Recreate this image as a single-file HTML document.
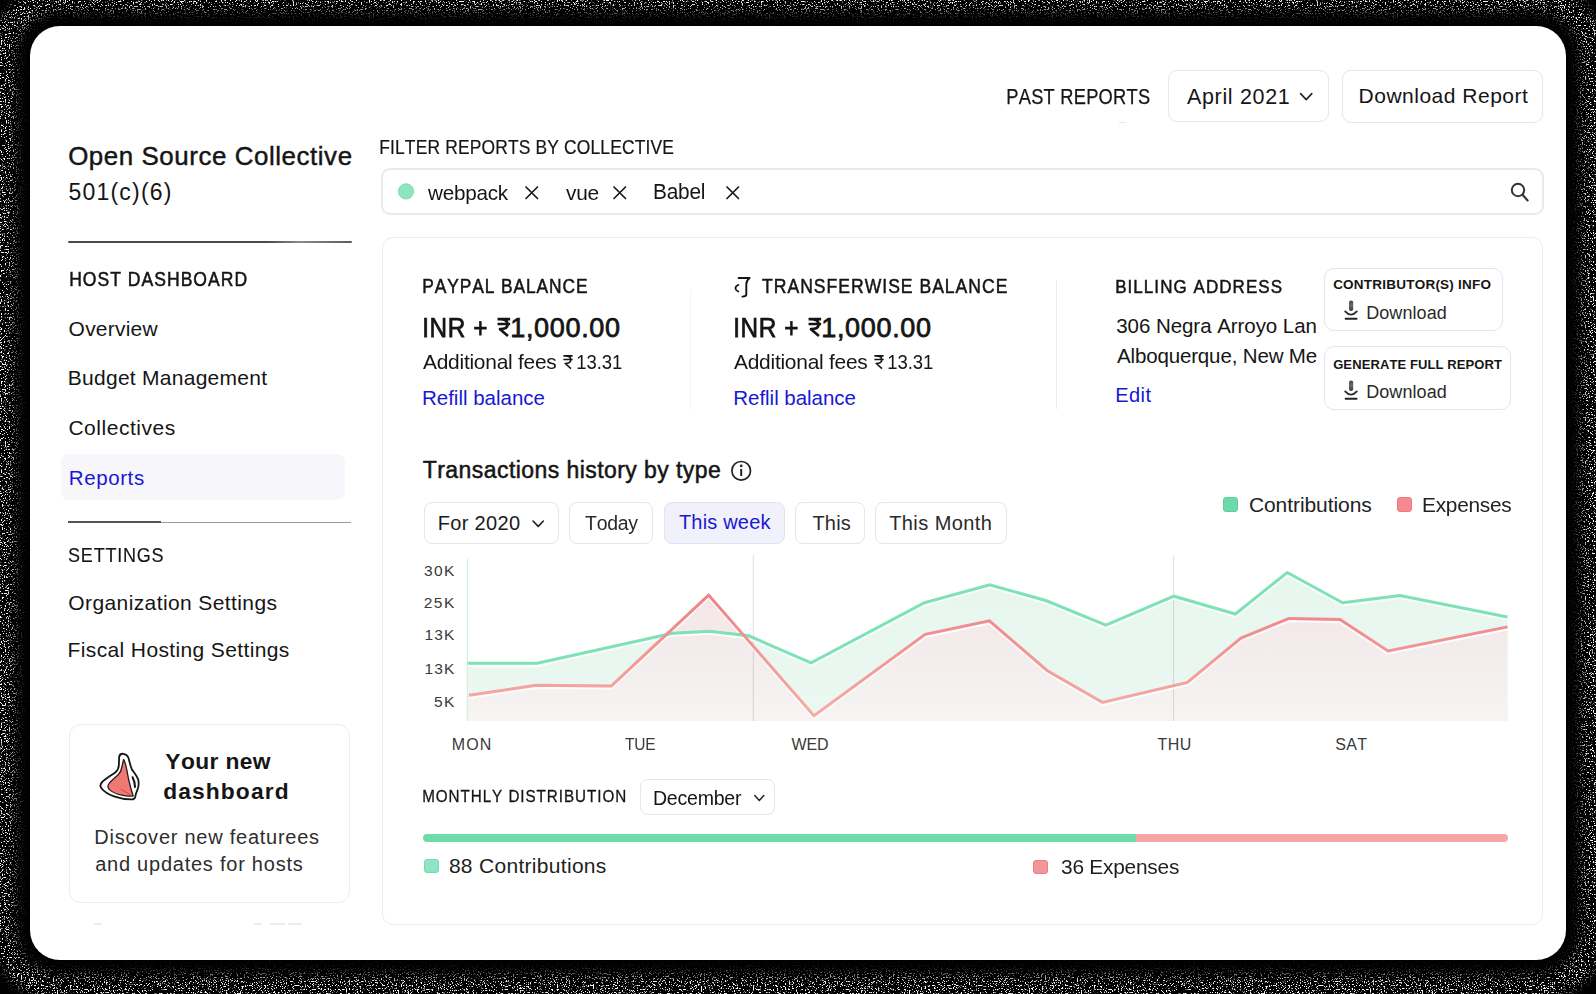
<!DOCTYPE html>
<html><head><meta charset="utf-8"><style>
html,body{margin:0;padding:0;background:#000;}
#root{position:relative;width:1596px;height:994px;overflow:hidden;background:#000;}
.t{position:absolute;white-space:nowrap;line-height:1;font-kerning:none;font-variant-ligatures:none;font-family:"Liberation Sans",sans-serif;}
svg{position:absolute;overflow:visible;}
</style></head><body><div id="root">

<svg style="left:0;top:0" width="1596" height="994" viewBox="0 0 1596 994">
<defs>
<filter id="bl" x="-10%" y="-10%" width="120%" height="120%"><feGaussianBlur stdDeviation="5"/></filter>
<filter id="nz" x="0" y="0" width="1596" height="994" filterUnits="userSpaceOnUse" color-interpolation-filters="sRGB">
<feTurbulence type="fractalNoise" baseFrequency="0.75" numOctaves="2" seed="11" result="t"/>
<feColorMatrix in="t" type="matrix" values="0 0 0 0 1  0 0 0 0 1  0 0 0 0 1  10 0 0 0 -5.75" result="d"/>
<feComposite in="d" in2="SourceGraphic" operator="in"/>
</filter>
<mask id="ringmask"><rect x="0" y="0" width="1596" height="994" fill="#fff"/><rect x="30" y="26" width="1536" height="934" rx="30" fill="#000"/></mask>
</defs>
<g filter="url(#nz)"><g mask="url(#ringmask)">
<rect x="2" y="-2" width="1592" height="990" rx="58" fill="none" stroke="#fff" stroke-width="24" filter="url(#bl)"/>
<rect x="16" y="12" width="1564" height="962" rx="44" fill="none" stroke="#fff" stroke-opacity="0.16" stroke-width="14" filter="url(#bl)"/>
</g></g>
</svg>
<div style="position:absolute;left:30.0px;top:26.0px;width:1536.0px;height:934.0px;background:#fff;border-radius:30px"></div>
<div class="t" style="left:68.17px;top:143.69px;font-size:25.90px;color:#151515;letter-spacing:0.566px;-webkit-text-stroke:0.45px #151515">Open Source Collective</div>
<div class="t" style="left:68.48px;top:180.95px;font-size:23.00px;color:#151515;letter-spacing:1.206px">501(c)(6)</div>
<div style="position:absolute;left:67.5px;top:241.4px;width:284.8px;height:2.0px;background:linear-gradient(90deg,#4a4a4a 0%,#4a4a4a 70%,#8a8a8a 82%,#5a5a5a 100%);border-radius:1px"></div>
<div class="t" style="left:69.15px;top:269.73px;font-size:19.50px;color:#151515;letter-spacing:1.122px;transform:scaleX(0.9000);transform-origin:1.60px 0;-webkit-text-stroke:0.50px #151515">HOST DASHBOARD</div>
<div class="t" style="left:68.61px;top:318.35px;font-size:21.00px;color:#151515;letter-spacing:0.204px">Overview</div>
<div class="t" style="left:67.78px;top:367.45px;font-size:21.00px;color:#151515;letter-spacing:0.269px">Budget Management</div>
<div class="t" style="left:68.43px;top:417.15px;font-size:21.00px;color:#151515;letter-spacing:0.529px">Collectives</div>
<div style="position:absolute;left:60.7px;top:453.9px;width:284.0px;height:46.1px;background:#f6f6fb;border-radius:8px"></div>
<div class="t" style="left:68.82px;top:468.18px;font-size:20.50px;color:#1818d2;letter-spacing:0.590px">Reports</div>
<div style="position:absolute;left:67.5px;top:521.4px;width:93.1px;height:1.6px;background:#555"></div>
<div style="position:absolute;left:160.6px;top:521.8px;width:190.8px;height:1.0px;background:#999"></div>
<div class="t" style="left:68.39px;top:544.60px;font-size:20.00px;color:#151515;letter-spacing:0.847px;transform:scaleX(0.9000);transform-origin:0.91px 0;-webkit-text-stroke:0.15px #151515">SETTINGS</div>
<div class="t" style="left:68.31px;top:591.85px;font-size:21.00px;color:#151515;letter-spacing:0.394px">Organization Settings</div>
<div class="t" style="left:67.58px;top:639.25px;font-size:21.00px;color:#151515;letter-spacing:0.372px">Fiscal Hosting Settings</div>
<div style="position:absolute;left:69.3px;top:724.0px;width:280.3px;height:179.0px;box-sizing:border-box;border:1.5px solid #ebebf0;border-radius:12px;background:#fff"></div>
<div class="t" style="left:165.31px;top:749.62px;font-size:22.80px;color:#151515;letter-spacing:0.376px;font-weight:700">Your new</div>
<div class="t" style="left:163.16px;top:779.82px;font-size:22.80px;color:#151515;letter-spacing:1.111px;font-weight:700">dashboard</div>
<div class="t" style="left:94.36px;top:826.70px;font-size:20.00px;color:#2e2e2e;letter-spacing:0.751px">Discover new featurees</div>
<div class="t" style="left:95.15px;top:853.80px;font-size:20.00px;color:#2e2e2e;letter-spacing:0.761px">and updates for hosts</div>
<svg style="left:95px;top:748px" width="50" height="60" viewBox="95 748 50 60">
<path d="M119.1,757.1 C119.5,754.5 121.5,753.6 123.3,753.8 C125.5,754 127.3,755.2 128.3,757.5 C129.2,760 130,765 131.8,769.2 C133.5,772 136.5,775 138.2,779.5 C139,783 138.6,787 137.4,789.8 C136.4,792 135.6,794.5 135.2,797 C134.6,799 133.2,799.6 131.5,799.4 C128,799.4 121,798.8 114.8,796.6 C110,795 104.5,792.2 101.6,788.5 C100,786.5 100.2,784 102.2,782 C104.5,779.6 111,775.5 115.5,772.2 C118,770 118.8,768 118.9,765 Z" fill="#fdfefe" stroke="#161616" stroke-width="1.8" stroke-linejoin="round"/>
<path d="M123.7,759.4 C125,762 126,766 126.8,770 C127.8,775 128.6,779.5 129.5,783 C130.6,788 132,792.5 133.2,796 C130,796.3 126,796.2 122,795.2 C117.5,794.2 112,792 109.5,789.6 C107.8,788 107.6,785.8 108.8,784 C110,782 114.5,778 118.2,774.8 C120.6,772.4 121.5,769.5 122.1,766.5 C122.6,763.5 123,761 123.7,759.4 Z" fill="#f07a72" stroke="#2b1b1b" stroke-width="1.3" stroke-linejoin="round"/>
<path d="M120.7,789.2 C124,790.8 127,792.6 130.5,795" fill="none" stroke="#c24e4a" stroke-width="1"/>
<path d="M132.6,777.2 C134,780 135,783.5 135,787" fill="none" stroke="#111" stroke-width="2" stroke-linecap="round"/>
</svg>
<div class="t" style="left:1005.74px;top:86.72px;font-size:21.50px;color:#151515;letter-spacing:0.288px;transform:scaleX(0.8500);transform-origin:1.76px 0;-webkit-text-stroke:0.25px #151515">PAST REPORTS</div>
<div style="position:absolute;left:1168.3px;top:69.7px;width:160.8px;height:52.8px;box-sizing:border-box;border:1.5px solid #e5e5eb;border-radius:9px"></div>
<div class="t" style="left:1186.96px;top:86.72px;font-size:21.50px;color:#151515;letter-spacing:0.664px">April 2021</div>
<svg style="left:1299px;top:91px" width="15" height="11" viewBox="1299 91 15 11"><path d="M1300.6,93.6 L1306.2,99.6 L1311.8,93.6" fill="none" stroke="#222" stroke-width="1.6" stroke-linecap="round" stroke-linejoin="round"/></svg>
<div style="position:absolute;left:1342.2px;top:69.8px;width:201.1px;height:52.9px;box-sizing:border-box;border:1.5px solid #e5e5eb;border-radius:9px"></div>
<div class="t" style="left:1358.58px;top:85.35px;font-size:21.00px;color:#151515;letter-spacing:0.501px">Download Report</div>
<div class="t" style="left:378.78px;top:137.77px;font-size:19.80px;color:#151515;letter-spacing:0.190px;transform:scaleX(0.8800);transform-origin:1.62px 0;-webkit-text-stroke:0.20px #151515">FILTER REPORTS BY COLLECTIVE</div>
<div style="position:absolute;left:381.2px;top:167.8px;width:1163.0px;height:47.7px;box-sizing:border-box;border:2px solid #e9e9ef;border-radius:9px"></div>
<svg style="left:396px;top:181px" width="20" height="20" viewBox="396 181 20 20"><circle cx="406" cy="191.4" r="7.6" fill="#8ee4c1" stroke="#79dcb2" stroke-width="1"/></svg>
<div class="t" style="left:428.43px;top:181.75px;font-size:21.00px;color:#151515;letter-spacing:-0.250px;transform:scaleX(0.9847);transform-origin:-0.03px 0">webpack</div>
<div class="t" style="left:566.23px;top:181.75px;font-size:21.00px;color:#151515;letter-spacing:-0.250px;transform:scaleX(0.9922);transform-origin:0.07px 0">vue</div>
<div class="t" style="left:652.94px;top:181.72px;font-size:21.50px;color:#151515;letter-spacing:-0.250px;transform:scaleX(0.9688);transform-origin:1.76px 0">Babel</div>
<svg style="left:525.3px;top:185.9px" width="13" height="13" viewBox="0 0 13 13"><path d="M1,1 L12.5,12.5 M12.5,1 L1,12.5" stroke="#1a1a1a" stroke-width="1.7" stroke-linecap="round"/></svg>
<svg style="left:613.3px;top:185.9px" width="13" height="13" viewBox="0 0 13 13"><path d="M1,1 L12.5,12.5 M12.5,1 L1,12.5" stroke="#1a1a1a" stroke-width="1.7" stroke-linecap="round"/></svg>
<svg style="left:725.5px;top:185.9px" width="13" height="13" viewBox="0 0 13 13"><path d="M1,1 L12.5,12.5 M12.5,1 L1,12.5" stroke="#1a1a1a" stroke-width="1.7" stroke-linecap="round"/></svg>
<svg style="left:1508px;top:180px" width="24" height="24" viewBox="1508 180 24 24"><circle cx="1518" cy="190" r="6.2" fill="none" stroke="#333" stroke-width="2"/><path d="M1522.6,194.8 L1527.6,200.4" stroke="#333" stroke-width="2.2" stroke-linecap="round"/></svg>
<div style="position:absolute;left:381.5px;top:236.6px;width:1161.8px;height:688.2px;box-sizing:border-box;border:1.5px solid #ececf1;border-radius:11px;background:#fff"></div>
<div style="position:absolute;left:689.5px;top:290.0px;width:1.0px;height:120.0px;background:#f5f5f7"></div>
<div style="position:absolute;left:1055.5px;top:280.0px;width:1.0px;height:129.0px;background:#ececf0"></div>
<div class="t" style="left:421.51px;top:315.05px;font-size:27.00px;color:#151515;letter-spacing:0.653px;transform:scaleX(0.9000);transform-origin:2.49px 0;-webkit-text-stroke:0.75px #151515">INR +</div>
<svg style="left:496.50px;top:318.30px" width="13.70" height="18.70" viewBox="0 0 100 100" preserveAspectRatio="none"><path d="M4,6 L96,6 M4,32 L96,32 M22,6 C70,6 78,22 78,34 C78,52 60,60 22,60 L80,96" fill="none" stroke="#151515" stroke-width="2.7" vector-effect="non-scaling-stroke" stroke-linejoin="round"/></svg>
<div class="t" style="left:510.24px;top:315.05px;font-size:27.00px;color:#151515;letter-spacing:0.673px;-webkit-text-stroke:0.75px #151515">1,000.00</div>
<div class="t" style="left:423.26px;top:351.05px;font-size:21.00px;color:#151515;letter-spacing:-0.250px;transform:scaleX(0.9965);transform-origin:0.04px 0">Additional fees</div>
<svg style="left:562.80px;top:355.30px" width="10.00" height="14.20" viewBox="0 0 100 100" preserveAspectRatio="none"><path d="M4,6 L96,6 M4,32 L96,32 M22,6 C70,6 78,22 78,34 C78,52 60,60 22,60 L80,96" fill="none" stroke="#151515" stroke-width="1.6" vector-effect="non-scaling-stroke" stroke-linejoin="round"/></svg>
<div class="t" style="left:576.30px;top:351.05px;font-size:21.00px;color:#151515;letter-spacing:-0.010px;transform:scaleX(0.8800);transform-origin:1.60px 0">13.31</div>
<div class="t" style="left:732.51px;top:315.05px;font-size:27.00px;color:#151515;letter-spacing:0.653px;transform:scaleX(0.9000);transform-origin:2.49px 0;-webkit-text-stroke:0.75px #151515">INR +</div>
<svg style="left:807.50px;top:318.30px" width="13.70" height="18.70" viewBox="0 0 100 100" preserveAspectRatio="none"><path d="M4,6 L96,6 M4,32 L96,32 M22,6 C70,6 78,22 78,34 C78,52 60,60 22,60 L80,96" fill="none" stroke="#151515" stroke-width="2.7" vector-effect="non-scaling-stroke" stroke-linejoin="round"/></svg>
<div class="t" style="left:821.24px;top:315.05px;font-size:27.00px;color:#151515;letter-spacing:0.673px;-webkit-text-stroke:0.75px #151515">1,000.00</div>
<div class="t" style="left:734.26px;top:351.05px;font-size:21.00px;color:#151515;letter-spacing:-0.250px;transform:scaleX(0.9965);transform-origin:0.04px 0">Additional fees</div>
<svg style="left:873.80px;top:355.30px" width="10.00" height="14.20" viewBox="0 0 100 100" preserveAspectRatio="none"><path d="M4,6 L96,6 M4,32 L96,32 M22,6 C70,6 78,22 78,34 C78,52 60,60 22,60 L80,96" fill="none" stroke="#151515" stroke-width="1.6" vector-effect="non-scaling-stroke" stroke-linejoin="round"/></svg>
<div class="t" style="left:887.30px;top:351.05px;font-size:21.00px;color:#151515;letter-spacing:-0.010px;transform:scaleX(0.8800);transform-origin:1.60px 0">13.31</div>
<div class="t" style="left:422.12px;top:276.70px;font-size:19.30px;color:#151515;letter-spacing:1.023px;transform:scaleX(0.9000);transform-origin:1.58px 0;-webkit-text-stroke:0.50px #151515">PAYPAL BALANCE</div>
<div class="t" style="left:422.02px;top:388.18px;font-size:20.50px;color:#1818d2;letter-spacing:-0.014px">Refill balance</div>
<div class="t" style="left:762.36px;top:277.03px;font-size:19.50px;color:#151515;letter-spacing:1.118px;transform:scaleX(0.9000);transform-origin:0.44px 0;-webkit-text-stroke:0.50px #151515">TRANSFERWISE BALANCE</div>
<div class="t" style="left:733.32px;top:388.18px;font-size:20.50px;color:#1818d2;letter-spacing:-0.037px">Reflil balance</div>
<svg style="left:733px;top:275px" width="20" height="25" viewBox="733 275 20 25"><path d="M738.6,278 L749.6,278 M749.6,278 C747.5,279.5 746.3,281.5 746.3,284.5 L746.3,294.2 C746.3,295.8 745,296.5 742.5,296.6" fill="none" stroke="#151515" stroke-width="1.9" stroke-linecap="round"/><path d="M738.4,284.8 C736,286 735.2,287.8 735.6,289 C736,290.2 737,291 738.4,291.5" fill="none" stroke="#151515" stroke-width="1.7" stroke-linecap="round"/></svg>
<div class="t" style="left:1115.45px;top:277.54px;font-size:18.90px;color:#151515;letter-spacing:1.173px;transform:scaleX(0.9000);transform-origin:1.55px 0;-webkit-text-stroke:0.50px #151515">BILLING ADDRESS</div>
<div class="t" style="left:1116.22px;top:316.27px;font-size:20.50px;color:#151515;letter-spacing:-0.052px">306 Negra Arroyo Lan</div>
<div class="t" style="left:1116.96px;top:345.57px;font-size:20.50px;color:#151515;letter-spacing:-0.144px">Alboquerque, New Me</div>
<div class="t" style="left:1115.36px;top:385.40px;font-size:20.00px;color:#1818d2;letter-spacing:0.375px">Edit</div>
<div style="position:absolute;left:1323.6px;top:267.8px;width:179.2px;height:63.1px;box-sizing:border-box;border:1.5px solid #e5e5eb;border-radius:10px"></div>
<div style="position:absolute;left:1323.6px;top:345.7px;width:187.0px;height:64.7px;box-sizing:border-box;border:1.5px solid #e5e5eb;border-radius:10px"></div>
<div class="t" style="left:1333.15px;top:278.12px;font-size:13.50px;color:#151515;letter-spacing:0.227px;font-weight:700">CONTRIBUTOR(S) INFO</div>
<div class="t" style="left:1333.17px;top:358.05px;font-size:13.00px;color:#151515;letter-spacing:0.102px;font-weight:700">GENERATE FULL REPORT</div>
<svg style="left:1340px;top:297.0px" width="20" height="24" viewBox="1340 297 20 24"><defs><linearGradient id="sh0" x1="0" y1="0" x2="0" y2="1"><stop offset="0" stop-color="#444"/><stop offset="0.5" stop-color="#6a6a6a"/><stop offset="1" stop-color="#3a3a3a"/></linearGradient></defs><rect x="1349" y="300.4" width="4.2" height="10.5" rx="2" fill="url(#sh0)"/><path d="M1345.2,311.4 Q1351,317.9 1356.8,311.4" fill="none" stroke="#2e2e2e" stroke-width="1.9" stroke-linecap="round"/><path d="M1345.6,318.7 L1356.6,318.7" stroke="#222" stroke-width="1.9" stroke-linecap="round"/></svg>
<svg style="left:1340px;top:376.5px" width="20" height="24" viewBox="1340 297 20 24"><defs><linearGradient id="sh79" x1="0" y1="0" x2="0" y2="1"><stop offset="0" stop-color="#444"/><stop offset="0.5" stop-color="#6a6a6a"/><stop offset="1" stop-color="#3a3a3a"/></linearGradient></defs><rect x="1349" y="300.4" width="4.2" height="10.5" rx="2" fill="url(#sh79)"/><path d="M1345.2,311.4 Q1351,317.9 1356.8,311.4" fill="none" stroke="#2e2e2e" stroke-width="1.9" stroke-linecap="round"/><path d="M1345.6,318.7 L1356.6,318.7" stroke="#222" stroke-width="1.9" stroke-linecap="round"/></svg>
<div class="t" style="left:1366.22px;top:304.00px;font-size:18.00px;color:#2a2a2a;letter-spacing:0.069px">Download</div>
<div class="t" style="left:1366.22px;top:383.30px;font-size:18.00px;color:#2a2a2a;letter-spacing:0.069px">Download</div>
<div class="t" style="left:422.78px;top:459.45px;font-size:23.00px;color:#151515;letter-spacing:0.433px;-webkit-text-stroke:0.50px #151515">Transactions history by type</div>
<svg style="left:729px;top:459px" width="25" height="25" viewBox="729 459 25 25"><circle cx="741.2" cy="470.8" r="9.3" fill="none" stroke="#222" stroke-width="1.7"/><path d="M741.2,469 L741.2,476" stroke="#222" stroke-width="2"/><circle cx="741.2" cy="465.9" r="1.3" fill="#222"/></svg>
<div style="position:absolute;left:423.5px;top:502.0px;width:135.3px;height:41.5px;box-sizing:border-box;border:1.5px solid #e5e5eb;border-radius:8px;background:#fff"></div>
<div style="position:absolute;left:569.1px;top:502.0px;width:84.2px;height:41.5px;box-sizing:border-box;border:1.5px solid #e5e5eb;border-radius:8px;background:#fff"></div>
<div style="position:absolute;left:664.0px;top:502.0px;width:121.4px;height:41.5px;box-sizing:border-box;border:1.5px solid #e2e2f3;border-radius:8px;background:#f1f1fb"></div>
<div style="position:absolute;left:795.3px;top:502.0px;width:69.5px;height:41.5px;box-sizing:border-box;border:1.5px solid #e5e5eb;border-radius:8px;background:#fff"></div>
<div style="position:absolute;left:874.5px;top:502.0px;width:132.0px;height:41.5px;box-sizing:border-box;border:1.5px solid #e5e5eb;border-radius:8px;background:#fff"></div>
<div class="t" style="left:437.76px;top:512.80px;font-size:20.00px;color:#1a1a1a;letter-spacing:0.325px">For 2020</div>
<svg style="left:531px;top:518px" width="15" height="11" viewBox="531 518 15 11"><path d="M533,521 L538.2,526.4 L543.4,521" fill="none" stroke="#222" stroke-width="1.6" stroke-linecap="round" stroke-linejoin="round"/></svg>
<div class="t" style="left:584.65px;top:512.80px;font-size:20.00px;color:#2a2a2a;letter-spacing:-0.250px;transform:scaleX(0.9723);transform-origin:0.45px 0">Today</div>
<div class="t" style="left:678.95px;top:511.80px;font-size:20.00px;color:#1818d2;letter-spacing:0.186px">This week</div>
<div class="t" style="left:812.45px;top:512.50px;font-size:20.00px;color:#2a2a2a;letter-spacing:0.196px">This</div>
<div class="t" style="left:889.15px;top:512.50px;font-size:20.00px;color:#2a2a2a;letter-spacing:0.436px">This Month</div>
<div style="position:absolute;left:1223.2px;top:497.0px;width:15.2px;height:14.8px;box-sizing:border-box;background:#6fdaa9;border:1px solid #5fd09c;border-radius:3px"></div>
<div class="t" style="left:1248.93px;top:493.95px;font-size:21.00px;color:#222;letter-spacing:-0.076px">Contributions</div>
<div style="position:absolute;left:1397.0px;top:497.0px;width:15.2px;height:14.8px;box-sizing:border-box;background:#f4898f;border:1px solid #ec7a80;border-radius:3px"></div>
<div class="t" style="left:1421.98px;top:493.95px;font-size:21.00px;color:#222;letter-spacing:-0.250px;transform:scaleX(0.9921);transform-origin:1.72px 0">Expenses</div>
<div class="t" style="left:423.91px;top:563.23px;font-size:15.50px;color:#3a3a3a;letter-spacing:1.393px">30K</div>
<div class="t" style="left:423.72px;top:594.93px;font-size:15.50px;color:#3a3a3a;letter-spacing:1.487px">25K</div>
<div class="t" style="left:424.42px;top:626.73px;font-size:15.50px;color:#3a3a3a;letter-spacing:1.138px">13K</div>
<div class="t" style="left:424.42px;top:660.53px;font-size:15.50px;color:#3a3a3a;letter-spacing:1.138px">13K</div>
<div class="t" style="left:433.88px;top:694.33px;font-size:15.50px;color:#3a3a3a;letter-spacing:1.436px">5K</div>
<div class="t" style="left:451.69px;top:736.80px;font-size:16.00px;color:#3a3a3a;letter-spacing:1.145px">MON</div>
<div class="t" style="left:625.14px;top:736.80px;font-size:16.00px;color:#3a3a3a;letter-spacing:-0.250px;transform:scaleX(0.9687);transform-origin:0.36px 0">TUE</div>
<div class="t" style="left:791.43px;top:736.80px;font-size:16.00px;color:#3a3a3a;letter-spacing:-0.146px">WED</div>
<div class="t" style="left:1157.44px;top:736.80px;font-size:16.00px;color:#3a3a3a;letter-spacing:0.455px">THU</div>
<div class="t" style="left:1335.27px;top:736.80px;font-size:16.00px;color:#3a3a3a;letter-spacing:0.288px">SAT</div>
<svg style="left:0;top:0" width="1596" height="994" viewBox="0 0 1596 994">
<defs>
<linearGradient id="rf" x1="0" y1="0" x2="0" y2="1" gradientUnits="objectBoundingBox"><stop offset="0" stop-color="#f6e6e6"/><stop offset="0.5" stop-color="#f3eded"/><stop offset="1" stop-color="#f8f4f4"/></linearGradient>
<linearGradient id="rs" x1="0" y1="590" x2="0" y2="720" gradientUnits="userSpaceOnUse"><stop offset="0" stop-color="#ef7f86"/><stop offset="1" stop-color="#f5b0a6"/></linearGradient>
<linearGradient id="gf" x1="0" y1="0" x2="0" y2="1"><stop offset="0" stop-color="#e6f7ef"/><stop offset="1" stop-color="#ecf7f2"/></linearGradient>
</defs>
<polygon points="467.6,721.0 467.6,663.3 537.2,663.3 672.5,633.2 709.6,631.2 748.7,635.8 811.1,662.8 924.5,602.7 989.8,584.8 1045.8,600.5 1105.9,625.1 1173.9,596.2 1235.4,614.0 1287.2,572.5 1342.6,602.8 1400.0,595.5 1507.5,617.0 1507.5,721.0" fill="url(#gf)"/>
<polygon points="467.6,721.0 467.6,695.6 469.0,695.3 536.2,685.3 611.4,685.9 708.6,595.1 814.0,715.7 925.2,634.4 989.4,620.9 1047.0,670.5 1102.4,702.4 1187.4,682.4 1241.0,638.0 1289.0,618.4 1340.0,619.5 1388.0,651.0 1507.5,626.9 1507.5,721.0" fill="url(#rf)"/>
<line x1="467.4" y1="559" x2="467.4" y2="721" stroke="#d5eee2" stroke-width="1.2"/>
<line x1="753.3" y1="555" x2="753.3" y2="721" stroke="#000" stroke-opacity="0.13" stroke-width="1"/>
<line x1="1173.6" y1="556" x2="1173.6" y2="721" stroke="#000" stroke-opacity="0.13" stroke-width="1"/>
<polyline points="467.6,663.3 537.2,663.3 672.5,633.2 709.6,631.2 748.7,635.8 811.1,662.8 924.5,602.7 989.8,584.8 1045.8,600.5 1105.9,625.1 1173.9,596.2 1235.4,614.0 1287.2,572.5 1342.6,602.8 1400.0,595.5 1507.5,617.0" fill="none" stroke="#ffffff" stroke-width="2" opacity="0.85" transform="translate(0,2.6)"/>
<polyline points="469.0,695.3 536.2,685.3 611.4,685.9 708.6,595.1 814.0,715.7 925.2,634.4 989.4,620.9 1047.0,670.5 1102.4,702.4 1187.4,682.4 1241.0,638.0 1289.0,618.4 1340.0,619.5 1388.0,651.0 1507.5,626.9" fill="none" stroke="#ffffff" stroke-width="2" opacity="0.85" transform="translate(0,2.6)"/>
<polyline points="467.6,663.3 537.2,663.3 672.5,633.2 709.6,631.2 748.7,635.8 811.1,662.8 924.5,602.7 989.8,584.8 1045.8,600.5 1105.9,625.1 1173.9,596.2 1235.4,614.0 1287.2,572.5 1342.6,602.8 1400.0,595.5 1507.5,617.0" fill="none" stroke="#7fe2b6" stroke-width="3" stroke-linejoin="miter"/>
<polyline points="469.0,695.3 536.2,685.3 611.4,685.9 708.6,595.1 814.0,715.7 925.2,634.4 989.4,620.9 1047.0,670.5 1102.4,702.4 1187.4,682.4 1241.0,638.0 1289.0,618.4 1340.0,619.5 1388.0,651.0 1507.5,626.9" fill="none" stroke="url(#rs)" stroke-width="3" stroke-linejoin="miter"/>
</svg>
<div class="t" style="left:421.71px;top:789.24px;font-size:16.90px;color:#151515;letter-spacing:1.069px;transform:scaleX(0.9000);transform-origin:1.39px 0;-webkit-text-stroke:0.30px #151515">MONTHLY DISTRIBUTION</div>
<div style="position:absolute;left:640.3px;top:779.2px;width:135.2px;height:35.7px;box-sizing:border-box;border:1.5px solid #e5e5eb;border-radius:8px"></div>
<div class="t" style="left:652.59px;top:788.84px;font-size:19.60px;color:#151515;letter-spacing:-0.250px;transform:scaleX(0.9974);transform-origin:1.61px 0">December</div>
<svg style="left:753px;top:793px" width="13" height="10" viewBox="753 793 13 10"><path d="M754.8,795.6 L759.3,800.4 L763.8,795.6" fill="none" stroke="#222" stroke-width="1.5" stroke-linecap="round" stroke-linejoin="round"/></svg>
<div style="position:absolute;left:423.1px;top:834.1px;width:1084.9px;height:7.7px;border-radius:4px;background:linear-gradient(90deg,#6ddca9 0,#6ddca9 713px,#f6a5a8 713px,#f6a5a8 100%)"></div>
<div style="position:absolute;left:423.8px;top:858.9px;width:15.5px;height:13.9px;box-sizing:border-box;background:#8ee5c1;border:1px solid #72dbaf;border-radius:3px"></div>
<div class="t" style="left:448.89px;top:854.95px;font-size:21.00px;color:#1e1e1e;letter-spacing:0.303px">88 Contributions</div>
<div style="position:absolute;left:1033.3px;top:860.4px;width:15.1px;height:14.0px;box-sizing:border-box;background:#f4959a;border:1px solid #ea7c83;border-radius:3px"></div>
<div class="t" style="left:1060.60px;top:855.95px;font-size:21.00px;color:#1e1e1e;letter-spacing:-0.250px;transform:scaleX(0.9952);transform-origin:0.80px 0">36 Expenses</div>
<div style="position:absolute;left:93.8px;top:923.3px;width:8.2px;height:1.7px;background:#ececf1"></div>
<div style="position:absolute;left:254.0px;top:923.3px;width:8.0px;height:1.7px;background:#ececf1"></div>
<div style="position:absolute;left:270.0px;top:923.3px;width:15.0px;height:1.7px;background:#ececf1"></div>
<div style="position:absolute;left:287.5px;top:923.3px;width:14.0px;height:1.7px;background:#ececf1"></div>
<div style="position:absolute;left:1119.0px;top:121.5px;width:7.0px;height:1.5px;background:#e6e6ea"></div>
</div></body></html>
